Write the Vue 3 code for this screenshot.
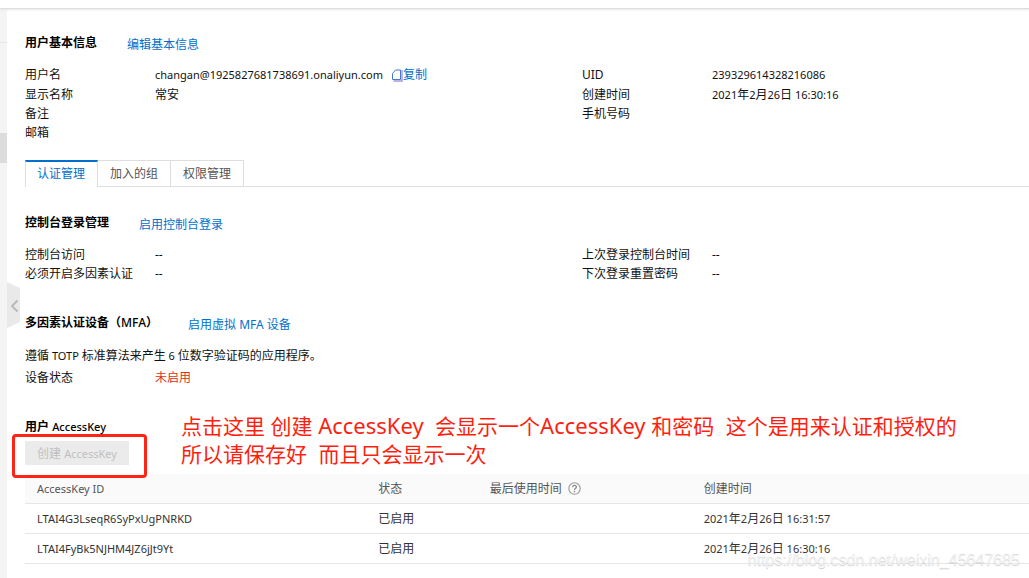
<script setup>
const basicLeft = [
  { label: '用户名', value: 'changan@1925827681738691.onaliyun.com', copy: true },
  { label: '显示名称', value: '常安' },
  { label: '备注', value: '' },
  { label: '邮箱', value: '' },
]
const basicRight = [
  { label: 'UID', value: '239329614328216086' },
  { label: '创建时间', value: '2021年2月26日 16:30:16' },
  { label: '手机号码', value: '' },
]
const loginLeft = [
  { label: '控制台访问', value: '--' },
  { label: '必须开启多因素认证', value: '--' },
]
const loginRight = [
  { label: '上次登录控制台时间', value: '--' },
  { label: '下次登录重置密码', value: '--' },
]
const tabs = ['认证管理', '加入的组', '权限管理']
const keys = [
  { id: 'LTAI4G3LseqR6SyPxUgPNRKD', status: '已启用', created: '2021年2月26日 16:31:57' },
  { id: 'LTAI4FyBk5NJHM4JZ6jJt9Yt', status: '已启用', created: '2021年2月26日 16:30:16' },
]

// Splits a string into Latin and Chinese runs so that each gets its own size.
function runs(text) {
  return (text.match(/[\w@.: ]+|[^\w@.: ]+/g) || []).map((t) => ({ t, latin: /[\w@]/.test(t) }))
}
</script>

<template>
  <div class="page">
    <div class="topbar"></div>
    <div class="body">
      <aside class="rail">
        <div class="rail-line"></div>
        <div class="rail-active"></div>
        <button class="collapse" type="button" aria-label="收起">
          <svg width="13" height="46" viewBox="0 0 13 46">
            <path d="M0 0 L13 6 V40 L0 46 Z" fill="#e9e9e9" />
            <path d="M10.5 18.5 L5 24 L10.5 29.5" fill="none" stroke="#b8b8b8" stroke-width="1.8" />
          </svg>
        </button>
      </aside>

      <main class="content">
        <section>
          <div class="head">
            <h2>用户基本信息</h2>
            <a href="#">编辑基本信息</a>
          </div>
          <div class="cols">
            <dl>
              <div v-for="r in basicLeft" :key="r.label" class="row" :class="{ first: r.copy }">
                <dt>{{ r.label }}</dt>
                <dd>
                  <span v-for="(p, i) in runs(r.value)" :key="i" :class="{ lat: p.latin }">{{ p.t }}</span>
                  <a v-if="r.copy" class="copy" href="#"><svg width="12" height="13" viewBox="0 0 12 13">
                    <path d="M4.5 1 H9.5 V10.5 H1.5 V4.5 Z" fill="#fff" stroke="#4b74d2" stroke-width="1" />
                    <path d="M11 1 V12 H2.5" fill="none" stroke="#9b9be0" stroke-width="1.4" />
                  </svg>复制</a>
                </dd>
              </div>
            </dl>
            <dl>
              <div v-for="(r, n) in basicRight" :key="r.label" class="row" :class="{ first: n === 0 }">
                <dt>{{ r.label }}</dt>
                <dd><span v-for="(p, i) in runs(r.value)" :key="i" :class="{ lat: p.latin }">{{ p.t }}</span></dd>
              </div>
            </dl>
          </div>
        </section>

        <nav class="tabs" role="tablist">
          <button
            v-for="(t, i) in tabs"
            :key="t"
            type="button"
            role="tab"
            :aria-selected="i === 0"
            :class="{ active: i === 0 }"
          >{{ t }}</button>
        </nav>

        <section class="login">
          <div class="head">
            <h2>控制台登录管理</h2>
            <a href="#">启用控制台登录</a>
          </div>
          <div class="cols">
            <dl>
              <div v-for="r in loginLeft" :key="r.label" class="row">
                <dt>{{ r.label }}</dt>
                <dd>{{ r.value }}</dd>
              </div>
            </dl>
            <dl>
              <div v-for="r in loginRight" :key="r.label" class="row">
                <dt>{{ r.label }}</dt>
                <dd>{{ r.value }}</dd>
              </div>
            </dl>
          </div>
        </section>

        <section class="mfa">
          <div class="head">
            <h2>多因素认证设备（<span>MFA</span>）</h2>
            <a href="#">启用虚拟 MFA 设备</a>
          </div>
          <p>遵循<span class="lat"> TOTP </span>标准算法来产生<span class="lat"> 6 </span>位数字验证码的应用程序。</p>
          <dl>
            <div class="row tall">
              <dt>设备状态</dt>
              <dd class="off">未启用</dd>
            </div>
          </dl>
        </section>

        <section class="keys">
          <h2>用户 <span class="lat">AccessKey</span></h2>
          <div class="action">
            <button class="create" type="button" disabled>创建 <span class="lat">AccessKey</span></button>
            <div class="frame"></div>
            <div class="note">点击这里 创建<span> AccessKey&nbsp; </span>会显示一个<span>AccessKey </span>和密码<span>&nbsp; </span>这个是用来认证和授权的<br>所以请保存好<span>&nbsp; </span>而且只会显示一次</div>
          </div>
          <table>
            <colgroup>
              <col class="c-id"><col class="c-status"><col class="c-used"><col>
            </colgroup>
            <thead>
              <tr>
                <th><span class="lat">AccessKey ID</span></th>
                <th>状态</th>
                <th>
                  <span class="used">最后使用时间
                    <svg width="13" height="13" viewBox="0 0 13 13">
                      <circle cx="6.5" cy="6.5" r="5.7" fill="none" stroke="#999" stroke-width="1.1" />
                      <path d="M4.7 5.2 C4.7 2.8 8.4 2.9 8.4 5 C8.4 6.3 6.5 6.3 6.5 7.9" fill="none" stroke="#888" stroke-width="1.2" />
                      <circle cx="6.5" cy="9.6" r="0.8" fill="#888" />
                    </svg>
                  </span>
                </th>
                <th>创建时间</th>
              </tr>
            </thead>
            <tbody>
              <tr v-for="k in keys" :key="k.id">
                <td><span class="lat">{{ k.id }}</span></td>
                <td>{{ k.status }}</td>
                <td></td>
                <td><span v-for="(p, i) in runs(k.created)" :key="i" :class="{ lat: p.latin }">{{ p.t }}</span></td>
              </tr>
            </tbody>
          </table>
        </section>
      </main>
    </div>
    <div class="watermark">https://blog.csdn.net/weixin_45647685</div>
  </div>
</template>

<style>
body {
  background: #fff;
  overflow: hidden;
}
</style>

<style scoped>
.page {
  position: relative;
  display: flex;
  flex-direction: column;
  min-height: 100vh;
  overflow: hidden;
  font-family: "Noto Sans", "Noto Sans CJK SC", sans-serif;
  font-size: 12px;
  color: #111;
}
.lat {
  font-size: 11px;
  white-space: pre;
}
.topbar {
  height: 8px;
  border-bottom: 1px solid #dedede;
  box-shadow: 0 1px 2px #e6e6e6;
  z-index: 1;
}
.body {
  display: flex;
  flex: 1;
}
.rail {
  position: relative;
  flex: none;
  width: 7px;
  background: #f4f4f4;
}
.rail-line {
  height: 33px;
  border-bottom: 1px solid #e6e6e6;
}
.rail-active {
  height: 30px;
  margin-top: 90px;
  background: #dcdcdc;
}
.collapse {
  position: absolute;
  left: 7px;
  top: 273px;
  padding: 0;
  border: 0;
  background: none;
}
.collapse svg {
  display: block;
}
.content {
  flex: 1;
  min-width: 0;
  padding: 25px 0 0 18px;
}
h2, p, dl, dd {
  margin: 0;
}
h2 {
  font-size: 12px;
  line-height: 18px;
  font-weight: 700;
  color: #000;
}
h2 span {
  font-weight: 500;
}
a {
  color: #0070cc;
  text-decoration: none;
}
.head {
  display: flex;
  gap: 30px;
  margin-bottom: 9px;
}
.head a {
  line-height: 22px;
}
.cols {
  display: grid;
  grid-template-columns: 557fr 447fr;
}
.row {
  display: flex;
  line-height: 19px;
  min-height: 19px;
}
.first {
  min-height: 20px;
}
.row dt {
  width: 130px;
  flex: none;
}
.row dd {
  white-space: nowrap;
}
.copy {
  margin-left: 8px;
}
.copy svg {
  vertical-align: -3px;
}
.tabs {
  display: flex;
  margin-top: 18px;
  border-bottom: 1px solid #dedede;
}
.tabs button {
  height: 26px;
  padding: 0 12px;
  border: 1px solid #dedede;
  border-width: 1px 1px 0 0;
  background: #fff;
  font: inherit;
  line-height: 24px;
  color: #555;
}
.tabs .active {
  height: 27px;
  margin-bottom: -1px;
  padding: 0 12px 1px 11px;
  border-left-width: 1px;
  border-top: 2px solid #0070cc;
  color: #0070cc;
}
.login {
  margin-top: 27px;
}
.mfa {
  margin-top: 31px;
}
.mfa p,
.tall {
  line-height: 22px;
}
.off {
  color: #d93026;
}
.keys {
  margin-top: 29px;
}
.action {
  position: relative;
  padding: 5px 0 9px;
}
.create {
  display: block;
  height: 24px;
  padding: 0 12px;
  border: 0;
  background: #ebebeb;
  font: inherit;
  color: #bfbfbf;
}
.frame {
  position: absolute;
  left: -13px;
  top: -2px;
  width: 129px;
  height: 38px;
  border: 3px solid #fe2416;
  border-radius: 4px;
}
.note {
  position: absolute;
  left: 156px;
  top: -24px;
  font-size: 21px;
  line-height: 28px;
  white-space: nowrap;
  color: #fe1f10;
}
.note span {
  font-size: 22px;
  line-height: 20px;
}
table {
  width: 100%;
  table-layout: fixed;
  border-collapse: collapse;
}
.c-id {
  width: 34%;
}
.c-status {
  width: 11.1%;
}
.c-used {
  width: 21.3%;
}
th,
td {
  height: 29px;
  padding: 0 12px;
  border-bottom: 1px solid #e6e6e6;
  text-align: left;
  font-weight: 400;
  line-height: 18px;
  white-space: nowrap;
}
th {
  background: #fafafa;
  color: #555;
}
td {
  color: #333;
}
.used {
  display: flex;
  align-items: center;
  gap: 6px;
}
.watermark {
  position: absolute;
  right: 9px;
  bottom: 8px;
  font-family: "Liberation Sans", sans-serif;
  font-size: 16px;
  line-height: 20px;
  color: rgba(255, 255, 255, 0.7);
  text-shadow: 0 1px 1px rgba(0, 0, 0, 0.2);
}
</style>
